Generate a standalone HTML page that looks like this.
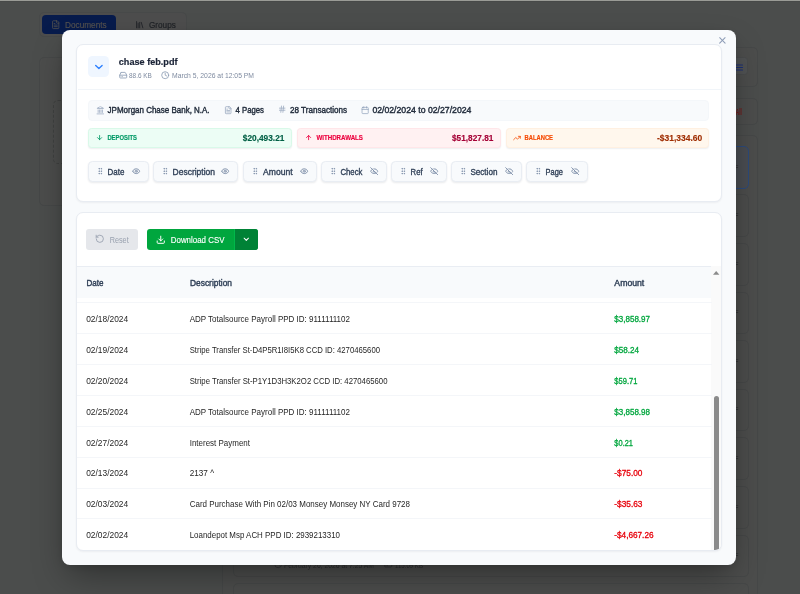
<!DOCTYPE html>
<html lang="en"><head><meta charset="utf-8"><title>chase feb.pdf</title>
<style>
*{box-sizing:border-box;margin:0;padding:0}
html,body{width:800px;height:594px;overflow:hidden}
body{position:relative;background:#4b4d4c;font-family:"Liberation Sans",sans-serif}
.a{position:absolute}
.t{position:absolute;white-space:pre;line-height:1;font-family:"Liberation Sans",sans-serif}
svg{position:absolute;overflow:visible;fill:none;stroke-linecap:round;stroke-linejoin:round}
.topline{left:0;top:0;width:800px;height:1px;background:#9a9b96}
.topline2{left:0;top:1px;width:800px;height:1px;background:#474948}
/* background ghosts */
.g{border:1px solid #464848;border-radius:5px;background:#4c4d4c}
.tabs{left:39px;top:12.3px;width:148.4px;height:24.4px;border-radius:5px;border:1px solid #474949;background:#4d4d4d}
.tabon{left:41.5px;top:15.3px;width:74.7px;height:18.8px;border-radius:4px;background:#071b4c}
/* modal */
.modal{left:62.2px;top:30.2px;width:673.9px;height:534.9px;border-radius:8px;background:#f8fafc;box-shadow:0 15px 34px -6px rgba(0,0,0,.38),0 2px 8px rgba(0,0,0,.1)}
.card{background:#fff;border:1px solid #e8ecf2;border-radius:7px;box-shadow:0 1px 2px rgba(15,23,42,.05)}
.c1{left:76.3px;top:44.4px;width:645.3px;height:158.1px}
.c2{left:76.3px;top:211.6px;width:645.3px;height:339.1px;overflow:hidden}
.chev{left:88.4px;top:56.4px;width:20.9px;height:20.9px;border-radius:4.5px;background:#eff6ff}
.sep{left:77.5px;top:89px;width:643px;height:1px;background:#f1f5f9}
.info{left:88.4px;top:99.7px;width:621px;height:21px;border-radius:4px;background:#f8fafc;border:1px solid #f4f7fa}
.stat{top:128px;height:19.6px;border-radius:3.5px;border:1px solid;box-shadow:0 1px 1.5px rgba(15,23,42,.07)}
.dep{left:88.4px;width:203.9px;background:#ecfdf5;border-color:#d9f9e9}
.wd{left:296.7px;width:204.7px;background:#fff1f2;border-color:#ffe6e9}
.bal{left:505.8px;width:203.6px;background:#fff7ed;border-color:#fff0e1}
.chip{top:161.4px;height:20.3px;border-radius:4.5px;border:1px solid #e9edf3;background:#f8fafc;box-shadow:0 1px 2px rgba(15,23,42,.09)}
.reset{left:86.25px;top:229.25px;width:51.75px;height:20.5px;border-radius:3px;background:#e5e7eb}
.dl{left:147.25px;top:229.25px;width:110.25px;height:20.5px;border-radius:3px;background:#00a63e;overflow:hidden}
.dl i{position:absolute;left:86.3px;top:0;width:24px;height:20.5px;background:#008236;border-left:.8px solid #00b84a}
.th{left:77.3px;top:266px;width:634.2px;height:32px;background:#f8fafc;border-top:1px solid #e9edf3}
.track{left:634.2px;top:53.9px;width:9.5px;height:284px;background:#fafafa}
.thumb{left:636.6px;top:183.4px;width:5.1px;height:154.5px;border-radius:2.6px 2.6px 0 0;background:#8b8b8b}
.rs{left:77px;width:634.5px;height:1px;background:#f4f6f9}
svg.txt{left:0;top:0;will-change:transform;stroke:none;stroke-linejoin:round}

</style></head>
<body>
<div class="a topline"></div><div class="a topline2"></div>

<!-- dimmed background page -->
<div class="a tabs"></div>
<div class="a tabon"></div>
<div class="a g" style="left:39px;top:57px;width:200px;height:148.5px"></div>
<div class="a" style="left:53.3px;top:100px;width:170px;height:63.5px;border:1px dashed #3f4140;border-radius:5px"></div>
<div class="a g" style="left:222px;top:46.5px;width:536px;height:40.2px"></div>
<div class="a g" style="left:222px;top:97.7px;width:536px;height:27.4px"></div>
<div class="a g" style="left:222px;top:135px;width:536px;height:470px"></div>
<div class="a g" style="left:232.5px;top:145.8px;width:516.1px;height:42.8px;border-color:#2c4a7c;background:#4a4d52"></div>
<div class="a g" style="left:232.5px;top:194.4px;width:516.1px;height:42.6px"></div>
<div class="a g" style="left:232.5px;top:243.0px;width:516.1px;height:42.6px"></div>
<div class="a g" style="left:232.5px;top:291.6px;width:516.1px;height:42.6px"></div>
<div class="a g" style="left:232.5px;top:340.2px;width:516.1px;height:42.6px"></div>
<div class="a g" style="left:232.5px;top:388.8px;width:516.1px;height:42.6px"></div>
<div class="a g" style="left:232.5px;top:437.4px;width:516.1px;height:42.6px"></div>
<div class="a g" style="left:232.5px;top:486.0px;width:516.1px;height:42.6px"></div>
<div class="a g" style="left:232.5px;top:534.6px;width:516.1px;height:42.6px"></div>
<div class="a g" style="left:232.5px;top:583.2px;width:516.1px;height:42.6px"></div>
<div class="a" style="left:725px;top:57.4px;width:22.6px;height:17.6px;border-radius:3.5px;background:#505253;border:1px solid #484a4b"></div>
<svg style="left:736px;top:63.5px" width="6.5" height="7" viewBox="0 0 6.5 7" stroke="#1c2f73" stroke-width="1.1"><path d="M0 1h6.5M0 3.5h6.5M0 6h6.5"/></svg>
<svg style="left:50.9px;top:19.95px" width="9.4" height="9.4" viewBox="0 0 24 24" stroke="#55524f" stroke-width="2"><path d="M15 2H6a2 2 0 0 0-2 2v16a2 2 0 0 0 2 2h12a2 2 0 0 0 2-2V7Z"/><path d="M14 2v4a2 2 0 0 0 2 2h4"/><path d="M10 9H8"/><path d="M16 13H8"/><path d="M16 17H8"/></svg>
<svg style="left:134.9px;top:19.9px" width="9.4" height="9.4" viewBox="0 0 24 24" stroke="#1f2226" stroke-width="2.2"><path d="m16 6 4 14"/><path d="M12 6v14"/><path d="M8 8v12"/><path d="M4 4v16"/></svg>

<svg style="left:274.40px;top:560.40px" width="8.4" height="8.4" viewBox="0 0 24 24" stroke="#2b2d2f" stroke-width="2"><circle cx="12" cy="12" r="10"/><polyline points="12 6 12 12 16 14"/></svg>
<svg style="left:383.80px;top:560.40px" width="8.4" height="8.4" viewBox="0 0 24 24" stroke="#2b2d2f" stroke-width="2"><line x1="22" x2="2" y1="12" y2="12"/><path d="M5.45 5.11 2 12v6a2 2 0 0 0 2 2h16a2 2 0 0 0 2-2v-6l-3.45-6.89A2 2 0 0 0 16.76 4H7.24a2 2 0 0 0-1.79 1.11z"/><line x1="6" x2="6.01" y1="16" y2="16"/><line x1="10" x2="10.01" y1="16" y2="16"/></svg>
<svg class="txt" width="800" height="594" viewBox="0 0 800 594" font-family="Liberation Sans, sans-serif" xml:space="preserve">
<text x="65.00" y="28" font-size="8.6" fill="#55524f" stroke="#55524f" stroke-width="0.15" textLength="41.70" lengthAdjust="spacingAndGlyphs">Documents</text>
<text x="149.00" y="28" font-size="8.6" fill="#202327" stroke="#202327" stroke-width="0.2" textLength="26.80" lengthAdjust="spacingAndGlyphs">Groups</text>
<text x="735.80" y="115" font-size="9.4" fill="#751616" font-weight="700" textLength="6.00" lengthAdjust="spacingAndGlyphs">All</text>
<text x="725.60" y="170" font-size="6.4" fill="#353738" font-weight="700" textLength="12.80" lengthAdjust="spacingAndGlyphs">PDF</text>
<text x="725.60" y="218" font-size="6.4" fill="#353738" font-weight="700" textLength="12.80" lengthAdjust="spacingAndGlyphs">PDF</text>
<text x="725.60" y="267" font-size="6.4" fill="#353738" font-weight="700" textLength="12.80" lengthAdjust="spacingAndGlyphs">PDF</text>
<text x="725.60" y="315" font-size="6.4" fill="#353738" font-weight="700" textLength="12.80" lengthAdjust="spacingAndGlyphs">PDF</text>
<text x="725.60" y="364" font-size="6.4" fill="#353738" font-weight="700" textLength="12.80" lengthAdjust="spacingAndGlyphs">PDF</text>
<text x="725.60" y="412" font-size="6.4" fill="#353738" font-weight="700" textLength="12.80" lengthAdjust="spacingAndGlyphs">PDF</text>
<text x="725.60" y="461" font-size="6.4" fill="#353738" font-weight="700" textLength="12.80" lengthAdjust="spacingAndGlyphs">PDF</text>
<text x="725.60" y="510" font-size="6.4" fill="#353738" font-weight="700" textLength="12.80" lengthAdjust="spacingAndGlyphs">PDF</text>
<text x="725.60" y="558" font-size="6.4" fill="#353738" font-weight="700" textLength="12.80" lengthAdjust="spacingAndGlyphs">PDF</text>
<text x="725.60" y="607" font-size="6.4" fill="#353738" font-weight="700" textLength="12.80" lengthAdjust="spacingAndGlyphs">PDF</text>
<text x="284.00" y="568" font-size="7.3" fill="#2b2d2f" textLength="90.00" lengthAdjust="spacingAndGlyphs">February 26, 2026 at 7:25 AM</text>
<text x="395.00" y="568" font-size="7.3" fill="#2b2d2f" textLength="28.00" lengthAdjust="spacingAndGlyphs">115.09 KB</text>
</svg>
<!-- modal -->
<div class="a modal"></div>
<div class="a card c1"></div>
<div class="a card c2"><div class="a track"></div><div class="a thumb"></div></div>
<div class="a chev"></div>
<div class="a sep"></div>
<div class="a info"></div>
<div class="a stat dep"></div><div class="a stat wd"></div><div class="a stat bal"></div>
<div class="a chip" style="left:88.4px;width:60.4px"></div>
<div class="a chip" style="left:153.3px;width:85.1px"></div>
<div class="a chip" style="left:243.4px;width:73.2px"></div>
<div class="a chip" style="left:321.3px;width:65.3px"></div>
<div class="a chip" style="left:391.3px;width:55.3px"></div>
<div class="a chip" style="left:451.3px;width:70.3px"></div>
<div class="a chip" style="left:526.3px;width:61.5px"></div>
<div class="a reset"></div>
<div class="a dl"><i></i></div>
<div class="a th"></div>
<div class="a rs" style="top:302px"></div>
<div class="a rs" style="top:333px"></div>
<div class="a rs" style="top:364px"></div>
<div class="a rs" style="top:395px"></div>
<div class="a rs" style="top:426px"></div>
<div class="a rs" style="top:457px"></div>
<div class="a rs" style="top:488px"></div>
<div class="a rs" style="top:518px"></div>
<svg style="left:717.10px;top:35.40px" width="10.8" height="10.8" viewBox="0 0 24 24" stroke="#8d9cb6" stroke-width="2.3"><path d="M18 6 6 18"/><path d="m6 6 12 12"/></svg>
<svg style="left:0;top:0" width="800" height="594" viewBox="0 0 800 594" stroke="#2b7fff" stroke-width="1.35"><path d="M95.7 65.5 98.9 68.5 102.1 65.5"/></svg>
<svg style="left:118.85px;top:70.80px" width="8.4" height="8.4" viewBox="0 0 24 24" stroke="#8a9bb3" stroke-width="2.3"><line x1="22" x2="2" y1="12" y2="12"/><path d="M5.45 5.11 2 12v6a2 2 0 0 0 2 2h16a2 2 0 0 0 2-2v-6l-3.45-6.89A2 2 0 0 0 16.76 4H7.24a2 2 0 0 0-1.79 1.11z"/><line x1="6" x2="6.01" y1="16" y2="16"/><line x1="10" x2="10.01" y1="16" y2="16"/></svg>
<svg style="left:161.05px;top:70.60px" width="8.4" height="8.4" viewBox="0 0 24 24" stroke="#8a9bb3" stroke-width="2.3"><circle cx="12" cy="12" r="10"/><polyline points="12 6 12 12 16 14"/></svg>
<svg style="left:95.65px;top:105.50px" width="8.6" height="8.6" viewBox="0 0 24 24" stroke="#a3b1c6" stroke-width="2.4"><path d="M10 18v-7"/><path d="M11.12 2.198a2 2 0 0 1 1.76.006l7.866 3.847c.476.233.31.949-.22.949H3.474c-.53 0-.695-.716-.22-.949z"/><path d="M14 18v-7"/><path d="M18 18v-7"/><path d="M3 22h18"/><path d="M6 18v-7"/></svg>
<svg style="left:223.70px;top:105.60px" width="8.4" height="8.4" viewBox="0 0 24 24" stroke="#90a1b9" stroke-width="2"><path d="M15 2H6a2 2 0 0 0-2 2v16a2 2 0 0 0 2 2h12a2 2 0 0 0 2-2V7Z"/><path d="M14 2v4a2 2 0 0 0 2 2h4"/><path d="M10 9H8"/><path d="M16 13H8"/><path d="M16 17H8"/></svg>
<svg style="left:277.80px;top:105.30px" width="8.4" height="8.4" viewBox="0 0 24 24" stroke="#90a1b9" stroke-width="2"><line x1="4" x2="20" y1="9" y2="9"/><line x1="4" x2="20" y1="15" y2="15"/><line x1="10" x2="8" y1="3" y2="21"/><line x1="16" x2="14" y1="3" y2="21"/></svg>
<svg style="left:360.65px;top:105.65px" width="8.3" height="8.3" viewBox="0 0 24 24" stroke="#90a1b9" stroke-width="2"><path d="M8 2v4"/><path d="M16 2v4"/><rect width="18" height="18" x="3" y="4" rx="2"/><path d="M3 10h18"/></svg>
<svg style="left:96.10px;top:134.10px" width="7.2" height="7.2" viewBox="0 0 24 24" stroke="#009966" stroke-width="2.8"><path d="M12 5v14"/><path d="m19 12-7 7-7-7"/></svg>
<svg style="left:305.10px;top:134.10px" width="7.2" height="7.2" viewBox="0 0 24 24" stroke="#ec003f" stroke-width="2.8"><path d="m5 12 7-7 7 7"/><path d="M12 19V5"/></svg>
<svg style="left:512.50px;top:133.70px" width="8" height="8" viewBox="0 0 24 24" stroke="#f54900" stroke-width="2.4"><polyline points="22 7 13.5 15.5 8.5 10.5 2 17"/><polyline points="16 7 22 7 22 13"/></svg>
<svg style="left:95.80px;top:167.40px" width="8.4" height="8.4" viewBox="0 0 24 24" stroke="#8494ac" stroke-width="2.4"><circle cx="9" cy="12" r="1"/><circle cx="9" cy="5" r="1"/><circle cx="9" cy="19" r="1"/><circle cx="15" cy="12" r="1"/><circle cx="15" cy="5" r="1"/><circle cx="15" cy="19" r="1"/></svg>
<svg style="left:131.80px;top:167.10px" width="8.4" height="8.4" viewBox="0 0 24 24" stroke="#8091aa" stroke-width="2.6"><path d="M2.062 12.348a1 1 0 0 1 0-.696 10.75 10.75 0 0 1 19.876 0 1 1 0 0 1 0 .696 10.75 10.75 0 0 1-19.876 0"/><circle cx="12" cy="12" r="3"/></svg>
<svg style="left:161.00px;top:167.40px" width="8.4" height="8.4" viewBox="0 0 24 24" stroke="#8494ac" stroke-width="2.4"><circle cx="9" cy="12" r="1"/><circle cx="9" cy="5" r="1"/><circle cx="9" cy="19" r="1"/><circle cx="15" cy="12" r="1"/><circle cx="15" cy="5" r="1"/><circle cx="15" cy="19" r="1"/></svg>
<svg style="left:221.20px;top:167.10px" width="8.4" height="8.4" viewBox="0 0 24 24" stroke="#8091aa" stroke-width="2.6"><path d="M2.062 12.348a1 1 0 0 1 0-.696 10.75 10.75 0 0 1 19.876 0 1 1 0 0 1 0 .696 10.75 10.75 0 0 1-19.876 0"/><circle cx="12" cy="12" r="3"/></svg>
<svg style="left:251.00px;top:167.40px" width="8.4" height="8.4" viewBox="0 0 24 24" stroke="#8494ac" stroke-width="2.4"><circle cx="9" cy="12" r="1"/><circle cx="9" cy="5" r="1"/><circle cx="9" cy="19" r="1"/><circle cx="15" cy="12" r="1"/><circle cx="15" cy="5" r="1"/><circle cx="15" cy="19" r="1"/></svg>
<svg style="left:299.60px;top:167.10px" width="8.4" height="8.4" viewBox="0 0 24 24" stroke="#8091aa" stroke-width="2.6"><path d="M2.062 12.348a1 1 0 0 1 0-.696 10.75 10.75 0 0 1 19.876 0 1 1 0 0 1 0 .696 10.75 10.75 0 0 1-19.876 0"/><circle cx="12" cy="12" r="3"/></svg>
<svg style="left:328.80px;top:167.40px" width="8.4" height="8.4" viewBox="0 0 24 24" stroke="#8494ac" stroke-width="2.4"><circle cx="9" cy="12" r="1"/><circle cx="9" cy="5" r="1"/><circle cx="9" cy="19" r="1"/><circle cx="15" cy="12" r="1"/><circle cx="15" cy="5" r="1"/><circle cx="15" cy="19" r="1"/></svg>
<svg style="left:369.60px;top:167.10px" width="8.4" height="8.4" viewBox="0 0 24 24" stroke="#8091aa" stroke-width="2.6"><path d="M10.733 5.076a10.744 10.744 0 0 1 11.205 6.575 1 1 0 0 1 0 .696 10.747 10.747 0 0 1-1.444 2.49"/><path d="M14.084 14.158a3 3 0 0 1-4.242-4.242"/><path d="M17.479 17.499a10.75 10.75 0 0 1-15.417-5.151 1 1 0 0 1 0-.696 10.75 10.75 0 0 1 4.446-5.143"/><path d="m2 2 20 20"/></svg>
<svg style="left:398.80px;top:167.40px" width="8.4" height="8.4" viewBox="0 0 24 24" stroke="#8494ac" stroke-width="2.4"><circle cx="9" cy="12" r="1"/><circle cx="9" cy="5" r="1"/><circle cx="9" cy="19" r="1"/><circle cx="15" cy="12" r="1"/><circle cx="15" cy="5" r="1"/><circle cx="15" cy="19" r="1"/></svg>
<svg style="left:429.60px;top:167.10px" width="8.4" height="8.4" viewBox="0 0 24 24" stroke="#8091aa" stroke-width="2.6"><path d="M10.733 5.076a10.744 10.744 0 0 1 11.205 6.575 1 1 0 0 1 0 .696 10.747 10.747 0 0 1-1.444 2.49"/><path d="M14.084 14.158a3 3 0 0 1-4.242-4.242"/><path d="M17.479 17.499a10.75 10.75 0 0 1-15.417-5.151 1 1 0 0 1 0-.696 10.75 10.75 0 0 1 4.446-5.143"/><path d="m2 2 20 20"/></svg>
<svg style="left:458.80px;top:167.40px" width="8.4" height="8.4" viewBox="0 0 24 24" stroke="#8494ac" stroke-width="2.4"><circle cx="9" cy="12" r="1"/><circle cx="9" cy="5" r="1"/><circle cx="9" cy="19" r="1"/><circle cx="15" cy="12" r="1"/><circle cx="15" cy="5" r="1"/><circle cx="15" cy="19" r="1"/></svg>
<svg style="left:504.60px;top:167.10px" width="8.4" height="8.4" viewBox="0 0 24 24" stroke="#8091aa" stroke-width="2.6"><path d="M10.733 5.076a10.744 10.744 0 0 1 11.205 6.575 1 1 0 0 1 0 .696 10.747 10.747 0 0 1-1.444 2.49"/><path d="M14.084 14.158a3 3 0 0 1-4.242-4.242"/><path d="M17.479 17.499a10.75 10.75 0 0 1-15.417-5.151 1 1 0 0 1 0-.696 10.75 10.75 0 0 1 4.446-5.143"/><path d="m2 2 20 20"/></svg>
<svg style="left:533.80px;top:167.40px" width="8.4" height="8.4" viewBox="0 0 24 24" stroke="#8494ac" stroke-width="2.4"><circle cx="9" cy="12" r="1"/><circle cx="9" cy="5" r="1"/><circle cx="9" cy="19" r="1"/><circle cx="15" cy="12" r="1"/><circle cx="15" cy="5" r="1"/><circle cx="15" cy="19" r="1"/></svg>
<svg style="left:570.80px;top:167.10px" width="8.4" height="8.4" viewBox="0 0 24 24" stroke="#8091aa" stroke-width="2.6"><path d="M10.733 5.076a10.744 10.744 0 0 1 11.205 6.575 1 1 0 0 1 0 .696 10.747 10.747 0 0 1-1.444 2.49"/><path d="M14.084 14.158a3 3 0 0 1-4.242-4.242"/><path d="M17.479 17.499a10.75 10.75 0 0 1-15.417-5.151 1 1 0 0 1 0-.696 10.75 10.75 0 0 1 4.446-5.143"/><path d="m2 2 20 20"/></svg>
<svg style="left:95.00px;top:234.10px" width="9.6" height="9.6" viewBox="0 0 24 24" stroke="#99a1af" stroke-width="2.2"><path d="M3 12a9 9 0 1 0 9-9 9.75 9.75 0 0 0-6.74 2.74L3 8"/><path d="M3 3v5h5"/></svg>
<svg style="left:156.45px;top:234.55px" width="9.5" height="9.5" viewBox="0 0 24 24" stroke="#ffffff" stroke-width="2.5"><path d="M21 15v4a2 2 0 0 1-2 2H5a2 2 0 0 1-2-2v-4"/><polyline points="7 10 12 15 17 10"/><line x1="12" x2="12" y1="15" y2="3"/></svg>
<svg style="left:241.90px;top:235.30px" width="8.6" height="8.6" viewBox="0 0 24 24" stroke="#ffffff" stroke-width="2.9"><path d="m6 9 6 6 6-6"/></svg>
<svg style="left:712.8px;top:270.6px" width="6.4" height="3.8" viewBox="0 0 6.4 3.8"><path d="M0 3.8 3.2 0 6.4 3.8Z" fill="#8b8b8b" stroke="none"/></svg>
<svg class="txt" width="800" height="594" viewBox="0 0 800 594" font-family="Liberation Sans, sans-serif" xml:space="preserve">
<text x="118.80" y="65" font-size="9.6" fill="#1a2336" font-weight="700" stroke="#1a2336" stroke-width="0.2" textLength="58.70" lengthAdjust="spacingAndGlyphs">chase feb.pdf</text>
<text x="129.00" y="78" font-size="7.5" fill="#7f8ba0" textLength="22.80" lengthAdjust="spacingAndGlyphs">88.6 KB</text>
<text x="172.00" y="78" font-size="7.5" fill="#7f8ba0" textLength="82.00" lengthAdjust="spacingAndGlyphs">March 5, 2026 at 12:05 PM</text>
<text x="107.60" y="113" font-size="8.8" fill="#1e2939" stroke="#1e2939" stroke-width="0.4" textLength="102.00" lengthAdjust="spacingAndGlyphs">JPMorgan Chase Bank, N.A.</text>
<text x="235.60" y="113" font-size="8.8" fill="#1e2939" stroke="#1e2939" stroke-width="0.4" textLength="28.40" lengthAdjust="spacingAndGlyphs">4 Pages</text>
<text x="290.00" y="113" font-size="8.8" fill="#1e2939" stroke="#1e2939" stroke-width="0.4" textLength="57.00" lengthAdjust="spacingAndGlyphs">28 Transactions</text>
<text x="372.40" y="113" font-size="8.8" fill="#1e2939" stroke="#1e2939" stroke-width="0.4" textLength="99.00" lengthAdjust="spacingAndGlyphs">02/02/2024 to 02/27/2024</text>
<text x="107.40" y="140" font-size="6.4" fill="#009966" font-weight="700" stroke="#009966" stroke-width="0.15" textLength="29.60" lengthAdjust="spacingAndGlyphs">DEPOSITS</text>
<text x="242.80" y="141" font-size="8.8" fill="#006045" font-weight="700" stroke="#006045" stroke-width="0.15" textLength="41.60" lengthAdjust="spacingAndGlyphs">$20,493.21</text>
<text x="316.40" y="140" font-size="6.4" fill="#ec003f" font-weight="700" stroke="#ec003f" stroke-width="0.15" textLength="46.60" lengthAdjust="spacingAndGlyphs">WITHDRAWALS</text>
<text x="452.00" y="141" font-size="8.8" fill="#a50036" font-weight="700" stroke="#a50036" stroke-width="0.15" textLength="41.40" lengthAdjust="spacingAndGlyphs">$51,827.81</text>
<text x="524.60" y="140" font-size="6.4" fill="#f54900" font-weight="700" stroke="#f54900" stroke-width="0.15" textLength="28.40" lengthAdjust="spacingAndGlyphs">BALANCE</text>
<text x="657.00" y="141" font-size="8.8" fill="#9f2d00" font-weight="700" stroke="#9f2d00" stroke-width="0.15" textLength="45.20" lengthAdjust="spacingAndGlyphs">-$31,334.60</text>
<text x="107.60" y="175" font-size="8.8" fill="#314158" stroke="#314158" stroke-width="0.35" textLength="16.80" lengthAdjust="spacingAndGlyphs">Date</text>
<text x="172.60" y="175" font-size="8.8" fill="#314158" stroke="#314158" stroke-width="0.35" textLength="42.40" lengthAdjust="spacingAndGlyphs">Description</text>
<text x="263.00" y="175" font-size="8.8" fill="#314158" stroke="#314158" stroke-width="0.35" textLength="29.60" lengthAdjust="spacingAndGlyphs">Amount</text>
<text x="340.40" y="175" font-size="8.8" fill="#314158" stroke="#314158" stroke-width="0.35" textLength="22.00" lengthAdjust="spacingAndGlyphs">Check</text>
<text x="410.60" y="175" font-size="8.8" fill="#314158" stroke="#314158" stroke-width="0.35" textLength="12.00" lengthAdjust="spacingAndGlyphs">Ref</text>
<text x="470.40" y="175" font-size="8.8" fill="#314158" stroke="#314158" stroke-width="0.35" textLength="27.00" lengthAdjust="spacingAndGlyphs">Section</text>
<text x="545.60" y="175" font-size="8.8" fill="#314158" stroke="#314158" stroke-width="0.35" textLength="17.40" lengthAdjust="spacingAndGlyphs">Page</text>
<text x="109.70" y="243" font-size="8.2" fill="#99a1af" textLength="19.00" lengthAdjust="spacingAndGlyphs">Reset</text>
<text x="170.75" y="243" font-size="8.2" fill="#ffffff" stroke="#ffffff" stroke-width="0.12" textLength="53.75" lengthAdjust="spacingAndGlyphs">Download CSV</text>
<text x="86.50" y="286" font-size="8.6" fill="#314158" stroke="#314158" stroke-width="0.4" textLength="17.00" lengthAdjust="spacingAndGlyphs">Date</text>
<text x="190.00" y="286" font-size="8.6" fill="#314158" stroke="#314158" stroke-width="0.4" textLength="42.00" lengthAdjust="spacingAndGlyphs">Description</text>
<text x="614.35" y="286" font-size="8.6" fill="#314158" stroke="#314158" stroke-width="0.4" textLength="29.95" lengthAdjust="spacingAndGlyphs">Amount</text>
<text x="86.20" y="322" font-size="8.6" fill="#262626" textLength="42.00" lengthAdjust="spacingAndGlyphs">02/18/2024</text>
<text x="189.70" y="322" font-size="8.6" fill="#262626" textLength="160.30" lengthAdjust="spacingAndGlyphs">ADP Totalsource Payroll PPD ID: 9111111102</text>
<text x="614.35" y="322" font-size="8.6" fill="#00a63e" stroke="#00a63e" stroke-width="0.3" textLength="35.65" lengthAdjust="spacingAndGlyphs">$3,858.97</text>
<text x="86.20" y="353" font-size="8.6" fill="#262626" textLength="42.00" lengthAdjust="spacingAndGlyphs">02/19/2024</text>
<text x="189.70" y="353" font-size="8.6" fill="#262626" textLength="190.30" lengthAdjust="spacingAndGlyphs">Stripe Transfer St-D4P5R1I8I5K8 CCD ID: 4270465600</text>
<text x="614.35" y="353" font-size="8.6" fill="#00a63e" stroke="#00a63e" stroke-width="0.3" textLength="24.75" lengthAdjust="spacingAndGlyphs">$58.24</text>
<text x="86.20" y="384" font-size="8.6" fill="#262626" textLength="42.00" lengthAdjust="spacingAndGlyphs">02/20/2024</text>
<text x="189.70" y="384" font-size="8.6" fill="#262626" textLength="197.80" lengthAdjust="spacingAndGlyphs">Stripe Transfer St-P1Y1D3H3K2O2 CCD ID: 4270465600</text>
<text x="614.35" y="384" font-size="8.6" fill="#00a63e" stroke="#00a63e" stroke-width="0.3" textLength="23.15" lengthAdjust="spacingAndGlyphs">$59.71</text>
<text x="86.20" y="415" font-size="8.6" fill="#262626" textLength="42.00" lengthAdjust="spacingAndGlyphs">02/25/2024</text>
<text x="189.70" y="415" font-size="8.6" fill="#262626" textLength="160.30" lengthAdjust="spacingAndGlyphs">ADP Totalsource Payroll PPD ID: 9111111102</text>
<text x="614.35" y="415" font-size="8.6" fill="#00a63e" stroke="#00a63e" stroke-width="0.3" textLength="35.65" lengthAdjust="spacingAndGlyphs">$3,858.98</text>
<text x="86.20" y="446" font-size="8.6" fill="#262626" textLength="42.00" lengthAdjust="spacingAndGlyphs">02/27/2024</text>
<text x="189.70" y="446" font-size="8.6" fill="#262626" textLength="60.30" lengthAdjust="spacingAndGlyphs">Interest Payment</text>
<text x="614.35" y="446" font-size="8.6" fill="#00a63e" stroke="#00a63e" stroke-width="0.3" textLength="18.65" lengthAdjust="spacingAndGlyphs">$0.21</text>
<text x="86.20" y="476" font-size="8.6" fill="#262626" textLength="42.00" lengthAdjust="spacingAndGlyphs">02/13/2024</text>
<text x="189.70" y="476" font-size="8.6" fill="#262626" textLength="24.30" lengthAdjust="spacingAndGlyphs">2137 ^</text>
<text x="614.35" y="476" font-size="8.6" fill="#e7000b" stroke="#e7000b" stroke-width="0.3" textLength="28.15" lengthAdjust="spacingAndGlyphs">-$75.00</text>
<text x="86.20" y="507" font-size="8.6" fill="#262626" textLength="42.00" lengthAdjust="spacingAndGlyphs">02/03/2024</text>
<text x="189.70" y="507" font-size="8.6" fill="#262626" textLength="220.30" lengthAdjust="spacingAndGlyphs">Card Purchase With Pin 02/03 Monsey Monsey NY Card 9728</text>
<text x="614.35" y="507" font-size="8.6" fill="#e7000b" stroke="#e7000b" stroke-width="0.3" textLength="28.15" lengthAdjust="spacingAndGlyphs">-$35.63</text>
<text x="86.20" y="538" font-size="8.6" fill="#262626" textLength="42.00" lengthAdjust="spacingAndGlyphs">02/02/2024</text>
<text x="189.70" y="538" font-size="8.6" fill="#262626" textLength="150.30" lengthAdjust="spacingAndGlyphs">Loandepot Msp ACH PPD ID: 2939213310</text>
<text x="614.35" y="538" font-size="8.6" fill="#e7000b" stroke="#e7000b" stroke-width="0.3" textLength="39.15" lengthAdjust="spacingAndGlyphs">-$4,667.26</text>
</svg>

</body></html>
